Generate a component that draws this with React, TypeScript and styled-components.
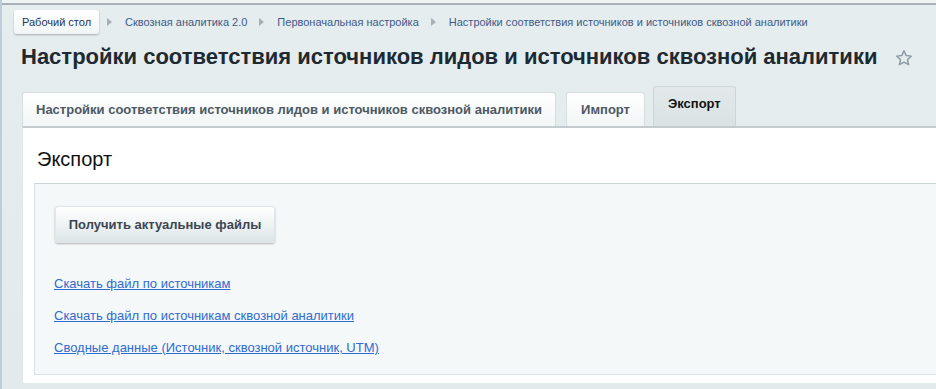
import React from "react";
import styled, { createGlobalStyle } from "styled-components";

const Global = createGlobalStyle`
  html, body { margin: 0; padding: 0; }
  body {
    background: #e4ecee;
    font-family: "Liberation Sans", Arial, sans-serif;
    overflow: hidden;
  }
`;

const Page = styled.div`
  width: 1000px;
  min-height: 389px;
  border-left: 2px solid #bfcdd8;
  box-sizing: border-box;
  background: linear-gradient(180deg, #e6edef 0%, #e2eaec 100%);
`;

const TopStrip = styled.div`
  height: 3px;
  background: #eef3f4;
  border-bottom: 2px solid #a9b1b6;
`;

const Breadcrumbs = styled.nav`
  display: flex;
  align-items: center;
  height: 24px;
  margin: 5px 0 0 12px;
`;

const HomeCrumb = styled.a`
  display: flex;
  align-items: center;
  height: 24px;
  padding: 0 8px;
  border-radius: 3px;
  background: linear-gradient(180deg, #ffffff 0%, #f1f5f6 100%);
  box-shadow: 0 1px 2px rgba(0, 0, 0, 0.28);
  color: #1d3556;
  font-size: 11px;
  margin-right: -4px;
`;

const Crumb = styled.a`
  color: #3d5a86;
  font-size: 11px;
`;

const Arrow = styled.span`
  width: 0;
  height: 0;
  margin: 0 13px 0 12px;
  border-top: 4px solid transparent;
  border-bottom: 4px solid transparent;
  border-left: 5px solid #a7b0b6;
`;

const TitleRow = styled.div`
  display: flex;
  align-items: center;
  gap: 18px;
  margin: 10px 0 0 19px;
  height: 26px;
`;

const Title = styled.h1`
  margin: 0;
  font-size: 22px;
  font-weight: bold;
  color: #1e2a31;
  white-space: nowrap;
`;

const Star = styled.svg`
  width: 18px;
  height: 18px;
  margin-top: 2px;
`;

const Tabs = styled.div`
  display: flex;
  align-items: flex-end;
  margin: 16px 0 0 20px;
  height: 40px;
`;

const Tab = styled.div<{ $active?: boolean; $gap?: number; $pad?: number }>`
  display: flex;
  align-items: center;
  box-sizing: border-box;
  height: ${(p) => (p.$active ? 40 : 34)}px;
  padding: ${(p) => (p.$active ? `0 ${p.$pad ?? 14}px 6px` : `0 ${p.$pad ?? 14}px`)};
  margin-right: ${(p) => p.$gap ?? 0}px;
  border: 1px solid ${(p) => (p.$active ? "#cdd5d9" : "#d5dde0")};
  border-bottom: none;
  border-radius: 3px 3px 0 0;
  background: ${(p) =>
    p.$active
      ? "linear-gradient(180deg, #e3e9eb 0%, #dae2e4 100%)"
      : "linear-gradient(180deg, #ffffff 0%, #f2f6f7 100%)"};
  font-size: 13px;
  font-weight: bold;
  color: ${(p) => (p.$active ? "#111" : "#4d5863")};
  white-space: nowrap;
`;

const Panel = styled.section`
  margin-left: 20px;
  background: #fff;
  border-top: 2px solid #c4cbcf;
  border-left: 1px solid #dfe5e8;
  height: 257px;
  box-sizing: border-box;
  padding: 0 0 0 11px;
`;

const PanelTitle = styled.h2`
  margin: 0;
  height: 55px;
  box-sizing: border-box;
  padding: 20px 0 0 3px;
  font-size: 20px;
  font-weight: normal;
  color: #111;
`;

const Box = styled.div`
  background: #f5f8f9;
  border-top: 1px solid #cdd4d8;
  border-left: 1px solid #dbe3e6;
  border-bottom: 1px solid #dbe3e6;
  height: 192px;
  box-sizing: border-box;
  padding: 22px 0 0 20px;
`;

const Button = styled.button`
  display: block;
  width: 220px;
  height: 37px;
  border: 1px solid #dfe5e8;
  border-radius: 3px;
  background: linear-gradient(180deg, #ffffff 0%, #f0f4f5 45%, #dde5e7 100%);
  box-shadow: 0 1px 2px rgba(0, 0, 0, 0.28);
  font-family: inherit;
  font-size: 13px;
  font-weight: bold;
  color: #3c4650;
  padding: 0;
  margin-bottom: 33px;
`;

const Links = styled.div`
  display: flex;
  flex-direction: column;
  gap: 16px;
`;

const Link = styled.a`
  font-size: 13px;
  color: #2f6bd0;
  text-decoration: underline;
  line-height: 16px;
  margin-left: -1px;
`;

export default function App() {
  return (
    <>
      <Global />
      <Page>
        <TopStrip />
        <Breadcrumbs>
          <HomeCrumb>Рабочий стол</HomeCrumb>
          <Arrow />
          <Crumb>Сквозная аналитика 2.0</Crumb>
          <Arrow />
          <Crumb>Первоначальная настройка</Crumb>
          <Arrow />
          <Crumb>Настройки соответствия источников и источников сквозной аналитики</Crumb>
        </Breadcrumbs>
        <TitleRow>
          <Title>Настройки соответствия источников лидов и источников сквозной аналитики</Title>
          <Star viewBox="0 0 24 24">
            <path
              d="M12 2.5l2.9 6.3 6.8.7-5.1 4.6 1.5 6.8L12 17.4l-6.1 3.5 1.5-6.8-5.1-4.6 6.8-.7z"
              fill="none"
              stroke="#8f9ba6"
              strokeWidth="2"
              strokeLinejoin="round"
            />
          </Star>
        </TitleRow>
        <Tabs>
          <Tab $gap={10} $pad={13}>Настройки соответствия источников лидов и источников сквозной аналитики</Tab>
          <Tab $gap={8} $pad={14}>Импорт</Tab>
          <Tab $active>Экспорт</Tab>
        </Tabs>
        <Panel>
          <PanelTitle>Экспорт</PanelTitle>
          <Box>
            <Button>Получить актуальные файлы</Button>
            <Links>
              <Link>Скачать файл по источникам</Link>
              <Link>Скачать файл по источникам сквозной аналитики</Link>
              <Link>Сводные данные (Источник, сквозной источник, UTM)</Link>
            </Links>
          </Box>
        </Panel>
      </Page>
    </>
  );
}
